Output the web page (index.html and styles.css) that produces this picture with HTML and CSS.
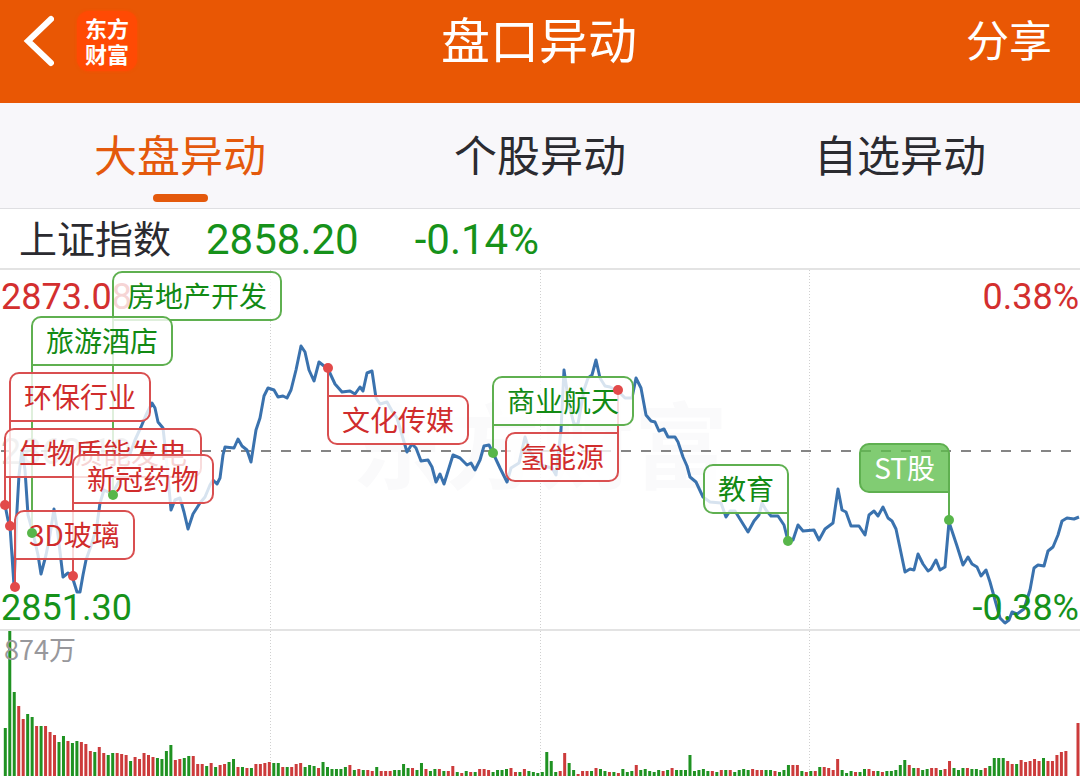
FILE: index.html
```html
<!DOCTYPE html>
<html lang="zh-CN">
<head>
  <meta charset="UTF-8">
  <meta name="viewport" content="width=device-width, initial-scale=1">
  <title>盘口异动</title>
  <link rel="stylesheet" href="styles.css">
</head>
<body>
  <header class="header">
    <div class="header-left">
      <button class="back" type="button" aria-label="返回">
        <svg width="32" height="52" viewBox="0 0 32 52"><path d="M29 4 L6 26 L29 48" /></svg>
      </button>
      <div class="logo">东方<br>财富</div>
    </div>
    <h1 class="title">盘口异动</h1>
    <button class="share" type="button">分享</button>
  </header>

  <nav class="tabs">
    <button class="tab active" type="button">大盘异动</button>
    <button class="tab" type="button">个股异动</button>
    <button class="tab" type="button">自选异动</button>
  </nav>

  <div class="index-row">
    <span class="index-name">上证指数</span>
    <span class="index-value">2858.20</span>
    <span class="index-change">-0.14%</span>
  </div>

  <main class="chart">
    <section class="price">
      <div class="watermark">东方财富</div>
      <span class="label mid">2862.19</span>
      <svg class="plot" id="pricePlot" viewBox="0 0 1080 360" preserveAspectRatio="none">
        <path class="grid" d="M270.5 0V360 M540.5 0V360 M809.5 0V360" />
        <path class="middle" d="M1 181H1080" />
        <polyline class="line" id="priceLine" />
      </svg>
      <span class="label high">2873.08</span>
      <span class="label high-pct">0.38%</span>
      <span class="label low">2851.30</span>
      <span class="label low-pct">-0.38%</span>
      <div id="flags"></div>
    </section>

    <section class="volume">
      <svg class="plot" id="volumePlot" viewBox="0 0 1080 145" preserveAspectRatio="none">
        <path class="grid" d="M270.5 0V145 M540.5 0V145 M809.5 0V145" />
      </svg>
      <span class="volume-max">874万</span>
    </section>
  </main>

  <script src="script.js"></script>
</body>
</html>
```
FILE: styles.css
```css
* {
  box-sizing: border-box;
}

body {
  margin: 0;
  background-color: #fff;
  color: #2b2b30;
  font-family: Roboto, "Noto Sans CJK SC", sans-serif;
  overflow-x: hidden;
}

button {
  padding: 0;
  border: 0;
  background: none;
  color: inherit;
  font-family: "Noto Sans CJK SC", sans-serif;
}

/* header */
.header {
  display: grid;
  grid-template-columns: 1fr auto 1fr;
  align-items: center;
  height: 103px;
  padding: 0 28px 22px 22px;
  background-color: #e95704;
  color: #fff;
}

.header-left {
  display: flex;
  align-items: center;
  gap: 23px;
}

.back svg {
  display: block;
  fill: none;
  stroke: #fff;
  stroke-width: 6;
  stroke-linecap: round;
}

.logo {
  width: 60px;
  height: 60px;
  padding: 3px 0;
  border-radius: 12px;
  background-color: #ff4a04;
  box-shadow: 0 0 3px #ff4a04;
  font-family: "Noto Sans CJK SC", sans-serif;
  font-size: 22px;
  font-weight: 700;
  line-height: 26px;
  text-align: center;
}

.title {
  margin: 0;
  padding: 0 0 6px 4px;
  font-family: "Noto Sans CJK SC", sans-serif;
  font-size: 49px;
  font-weight: 400;
  line-height: 60px;
}

.share {
  justify-self: end;
  padding-bottom: 6px;
  font-size: 43px;
  line-height: 60px;
}

/* tabs */
.tabs {
  display: grid;
  grid-template-columns: repeat(3, 1fr);
  height: 106px;
  background-color: #f8f7fa;
  border-bottom: 1px solid #dfdfe2;
}

.tab {
  display: flex;
  flex-direction: column;
  align-items: center;
  padding-top: 18px;
  font-size: 43px;
  line-height: 64px;
}

.tab.active {
  color: #e4590c;
}

.tab.active::after {
  content: "";
  width: 55px;
  height: 8px;
  margin-top: 9px;
  border-radius: 4px;
  background-color: #e4590c;
}

/* index */
.index-row {
  display: flex;
  align-items: center;
  height: 61px;
  padding: 2px 0 0 19px;
  border-bottom: 2px solid #e3e3e3;
  font-size: 42px;
  line-height: 56px;
  color: #16921a;
}

.index-name {
  margin-right: 35px;
  font-size: 38px;
  color: #2b2b30;
}

.index-value {
  margin-right: 56px;
}

/* chart */
.price {
  position: relative;
  height: 361px;
  border-bottom: 2px solid #e3e3e3;
}

.volume {
  position: relative;
  height: 145px;
}

.plot {
  position: absolute;
  left: 0;
  top: 0;
  width: 100%;
  height: 100%;
}

.price .plot {
  height: 360px;
}

.grid {
  fill: none;
  stroke: #d0d0d0;
  stroke-dasharray: 1 2;
}

.middle {
  stroke: #858585;
  stroke-width: 2;
  stroke-dasharray: 10 10;
}

.line {
  fill: none;
  stroke: #3a72ae;
  stroke-width: 3;
  stroke-linejoin: round;
}

.bar-up {
  fill: #cc3b3b;
}

.bar-down {
  fill: #1f9222;
}

.watermark {
  position: absolute;
  top: 115px;
  left: 0;
  width: 100%;
  color: #fafafb;
  font-size: 94px;
  font-weight: 700;
  line-height: 130px;
  text-align: center;
}

.label {
  position: absolute;
  font-size: 36px;
  line-height: 44px;
}

.high {
  top: 5px;
  left: 1px;
  color: #d32f2f;
}

.high-pct {
  top: 5px;
  right: 1px;
  color: #d32f2f;
}

.mid {
  top: 160px;
  left: 1px;
  color: #bbb;
}

.low {
  top: 316px;
  left: 1px;
  color: #16921a;
}

.low-pct {
  top: 316px;
  right: 1px;
  color: #16921a;
}

.volume-max {
  position: absolute;
  top: 0;
  left: 4px;
  color: #98989c;
  font-family: "Noto Sans CJK SC", sans-serif;
  font-size: 27px;
  line-height: 36px;
}

/* flags */
.flag {
  position: absolute;
  height: 50px;
  padding: 0 13px;
  border: 2px solid;
  border-radius: 10px;
  background-color: rgba(255, 255, 255, 0.8);
  font-family: "Noto Sans CJK SC", sans-serif;
  font-size: 28px;
  line-height: 44px;
  white-space: nowrap;
}

.flag.up {
  border-color: #d94f50;
  color: #d02c2c;
}

.flag.down {
  border-color: #5fb050;
  color: #128a14;
}

.flag.solid {
  background-color: rgba(94, 190, 76, 0.78);
  color: #fff;
}

.flag.left.above {
  border-bottom-left-radius: 0;
}

.flag.right.above {
  border-bottom-right-radius: 0;
}

.flag.left.below {
  border-top-left-radius: 0;
}

.flag.right.below {
  border-top-right-radius: 0;
}

.pole {
  position: absolute;
  width: 2px;
  background-color: #5fb050;
}

.up .pole {
  background-color: #d94f50;
}

.left .pole {
  left: -2px;
}

.right .pole {
  right: -2px;
}

.above .pole {
  top: 100%;
}

.below .pole {
  bottom: 100%;
}

.dot {
  position: absolute;
  width: 10px;
  height: 10px;
  margin: -5px 0 0 -5px;
  border-radius: 50%;
  background-color: #58b64a;
}

.dot.up {
  background-color: #e24a4a;
}
```
FILE: script.js
```js
const WIDTH = 1080;
const SVG_NS = 'http://www.w3.org/2000/svg';

// x,y pairs of the index line
const linePoints = `
5,235 8,250 10,256 14,316 17,240 19,205 22,180 25,200 28,245 33,263 38,285 41,304 46,285 50,265 54,239
58,265 63,307 68,303 72,306 77,322 80,322 83,305 86,290 92,273 97,255 100,233 104,220 112,224 122,206
135,170 141,157 146,145 152,133 155,138 158,152 163,158 166,185 171,240 175,230 180,228 184,242 188,259
193,244 200,233 205,227 210,215 213,210 217,214 220,208 223,185 225,177 234,178 238,169 242,176 247,180
251,192 256,160 260,148 264,126 268,118 274,120 278,127 283,126 287,128 291,120 296,100 301,76 305,82
309,100 314,111 319,92 324,96 328,99 335,114 342,122 350,121 355,124 360,117 363,121 367,103 372,101
376,128 380,134 387,132 392,141 397,148 402,165 407,182 412,174 416,178 421,191 428,190 432,197 436,212
440,204 444,214 453,185 460,188 467,195 471,193 475,200 480,190 484,176 489,175 493,183 500,198 507,212
511,198 519,193 525,167 530,182 540,195 552,198 556,205 561,160 564,100 569,135 574,154 578,154 584,120
588,108 592,105 596,90 600,108 605,116 610,117 618,121 625,128 632,128 636,108 641,118 646,145 651,151
655,152 659,161 664,159 668,167 675,167 678,172 683,187 687,196 690,207 696,212 703,227 710,232 721,233
726,247 730,241 735,241 748,262 754,251 759,245 762,233 766,240 771,246 778,246 784,255 788,271 793,270
798,255 803,261 814,260 819,270 825,259 833,253 838,219 842,240 846,242 851,256 859,256 865,265 869,245
874,241 878,246 883,237 888,248 892,251 896,259 900,278 905,302 910,299 914,300 918,284 923,294 928,301
931,299 936,290 940,300 945,297 949,252 957,276 963,295 968,287 972,294 977,297 981,306 986,300 990,312
995,330 1000,348 1005,353 1009,350 1012,342 1017,344 1024,339 1030,320 1034,298 1038,295 1044,296
1048,281 1053,277 1058,265 1062,251 1067,248 1074,249 1079,247`;

// r = up minute, g = down minute, number = bar height
const volumes = `
g48 g145 g84 r70 r57 g62 g59 r50 g50 r50 r44 r41 g34 g40 r35 g33 g35 r34 r32 r25 g24 r29 r23 g21 g23 r23
r22 r21 g15 r19 r17 r23 r21 r19 g18 g17 g25 g31 r16 r17 g18 g20 r20 r12 r12 g10 r13 g9 r11 r12 g14 g17
r9 g9 r8 g8 r12 r12 r13 r14 g13 g13 r9 g9 r9 r12 r13 g9 g11 g10 r8 g14 g9 g7 g7 g7 g9 r11 g6 r7 g6 r6 r5
g9 r5 r5 r5 g6 g6 g12 g8 r8 g6 g13 r7 g5 g7 r7 g5 r5 r10 g4 r3 g5 r4 g4 r7 r7 r6 g4 g6 g6 g7 r8 r4 g4 r7
g5 g4 g3 g4 g24 g15 g4 r5 r23 g13 g6 r2 r5 r5 g5 r8 g7 g5 r4 g4 r3 g7 g4 g5 r11 g6 g7 g5 g4 g6 r5 g6 r8
g6 g6 g6 g21 g5 g6 g7 g5 r5 g4 r6 g6 r6 g4 g6 g7 g6 r7 r6 r6 g6 g6 r5 g4 g6 g11 r11 r11 g5 r4 g5 r5 g9
r9 r8 r6 r17 g6 g3 g5 r4 g4 g7 r7 r5 g5 r4 g5 g5 g6 g11 g16 r11 g8 r8 g6 g7 r8 r8 g6 r7 r15 g8 g6 g8 r8
g7 g7 g6 r8 g10 g18 g18 g18 r15 r12 g12 r16 r14 r15 r17 r15 g18 r15 r15 r21 r24 r25`;

// x, y: marked point on the line; top: top edge of the flag
const flags = [
  { text: '房地产开发', x: 113, y: 225, top: 1, side: 'left', type: 'down' },
  { text: '旅游酒店', x: 32, y: 263, top: 46, side: 'left', type: 'down' },
  { text: '环保行业', x: 10, y: 256, top: 102, side: 'left', type: 'up' },
  { text: '生物质能发电', x: 5, y: 235, top: 158, side: 'left', type: 'up' },
  { text: '新冠药物', x: 73, y: 306, top: 184, side: 'left', type: 'up' },
  { text: '3D玻璃', x: 15, y: 317, top: 240, side: 'left', type: 'up' },
  { text: '文化传媒', x: 328, y: 98, top: 125, side: 'left', type: 'up' },
  { text: '氢能源', x: 618, y: 120, top: 162, side: 'right', type: 'up' },
  { text: '商业航天', x: 493, y: 183, top: 106, side: 'left', type: 'down' },
  { text: '教育', x: 788, y: 271, top: 194, side: 'right', type: 'down' },
  { text: 'ST股', x: 949, y: 250, top: 173, side: 'right', type: 'down solid' }
];
const FLAG_HEIGHT = 50;

document.getElementById('priceLine').setAttribute('points', linePoints.trim());

function addBar(x, height, up) {
  const rect = document.createElementNS(SVG_NS, 'rect');
  rect.setAttribute('class', up ? 'bar-up' : 'bar-down');
  rect.setAttribute('x', x - 1.5);
  rect.setAttribute('y', 145 - height);
  rect.setAttribute('width', 3);
  rect.setAttribute('height', height);
  document.getElementById('volumePlot').appendChild(rect);
}

volumes.trim().split(/\s+/).forEach((item, i) => {
  addBar(5.3 + i * 4.475, Number(item.slice(1)), item[0] === 'r');
});
// closing auction
addBar(1078, 53, true);

const flagLayer = document.getElementById('flags');

flags.forEach(f => {
  const above = f.top < f.y - FLAG_HEIGHT / 2;
  const el = document.createElement('div');
  el.className = `flag ${f.type} ${f.side} ${above ? 'above' : 'below'}`;
  el.textContent = f.text;
  el.style.top = f.top + 'px';
  const edge = f.side === 'left' ? f.x - 1 : WIDTH - f.x - 1;
  el.style[f.side] = (edge / WIDTH * 100) + '%';

  const pole = document.createElement('i');
  pole.className = 'pole';
  pole.style.height = (above ? f.y - f.top - FLAG_HEIGHT : f.top - f.y) + 'px';
  el.appendChild(pole);
  flagLayer.appendChild(el);
});

// dots stay on top of every flag
flags.forEach(f => {
  const dot = document.createElement('i');
  dot.className = `dot ${f.type}`;
  dot.style.left = (f.x / WIDTH * 100) + '%';
  dot.style.top = f.y + 'px';
  flagLayer.appendChild(dot);
});
```
